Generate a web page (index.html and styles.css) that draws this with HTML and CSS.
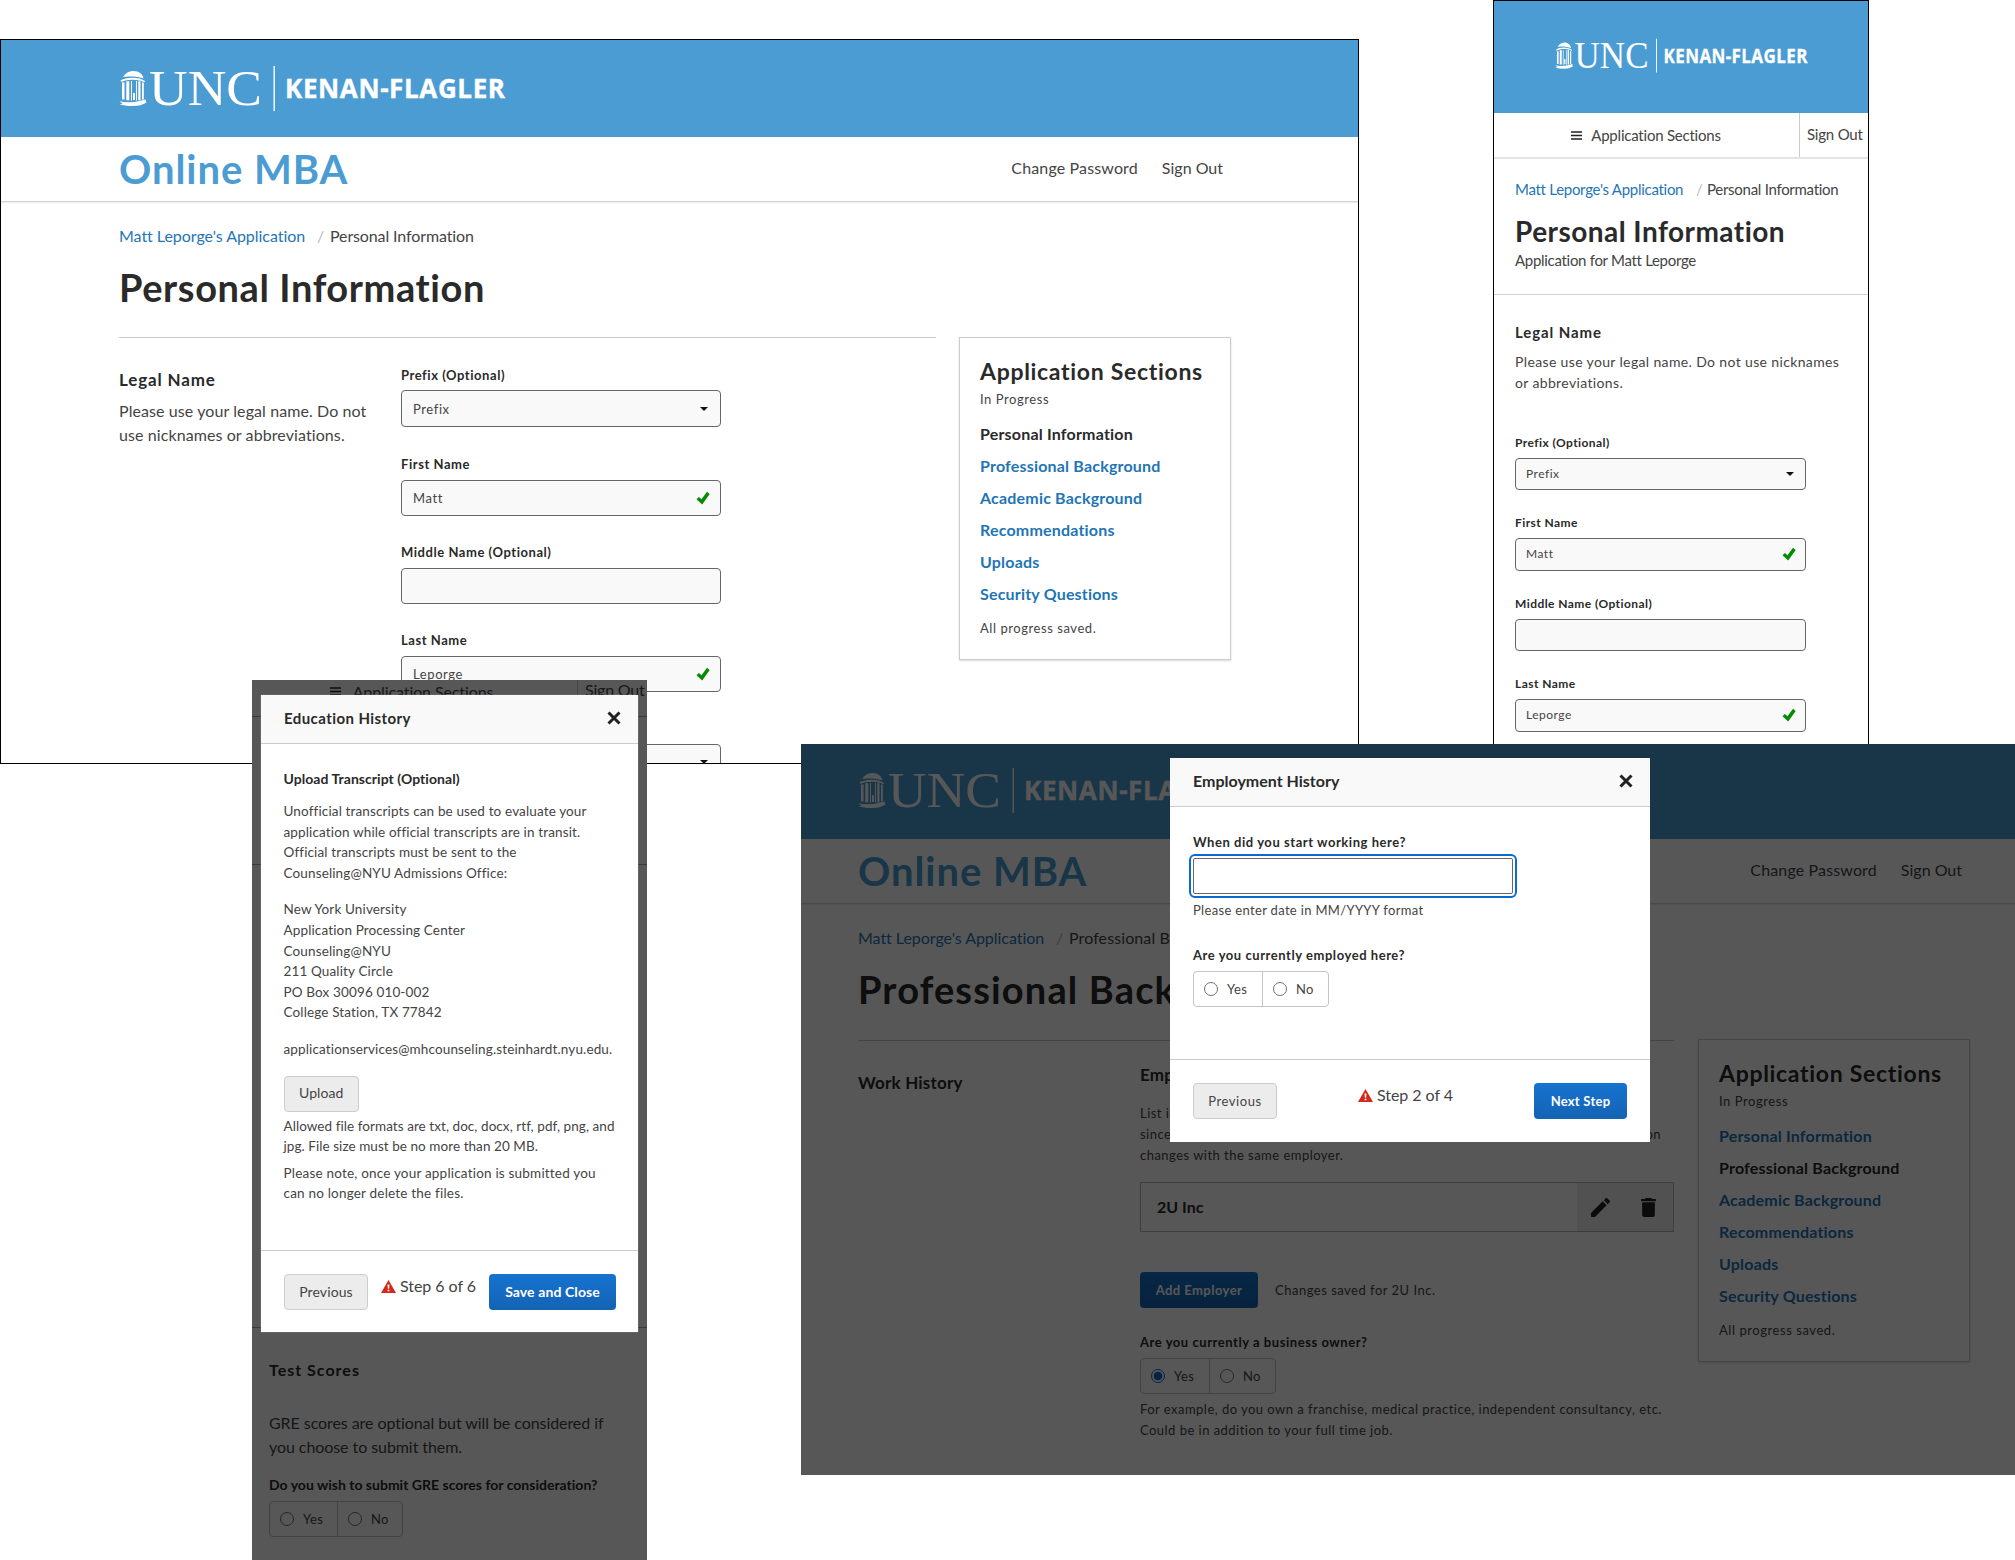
FILE: index.html
```html
<!DOCTYPE html>
<html lang="en">
<head>
<meta charset="utf-8">
<title>Application</title>
<link rel="stylesheet" href="styles.css">
</head>
<body>
<svg width="0" height="0" class="defs">
  <defs>
    <symbol id="logo" viewBox="0 0 390 48" preserveAspectRatio="none">
      <g fill="#fff">
        <path d="M4 12 C7 7.500 11 6 14.500 6 C20 6 24 9.500 24.500 13.500 C20 11.500 9 10.800 4 12z"/>
        <path d="M1.500 15.500 C7 11.600 21 11.600 26 16 L25.500 17.300 C20 13.800 8 13.800 2.500 17z"/>
        <path d="M3 17.500h2.500v17h-2.500zM7.300 16.300h3v19h-3zM12 16h1v19.500h-1zM17 16h1v19.500h-1zM19.300 16.300h2.200v19h-2.200zM23 17.500h1.800v17h-1.800zM14 28.500q1-1.500 2 0v6.500h-2z"/>
        <path d="M.5 36.200 Q12 38.800 26.500 34.500 L27.500 37.500 Q22 41 14 41 Q5 41 .5 39.200 L3.500 38.700z"/>
      </g>
      <text x="30" y="39.800" textLength="113" lengthAdjust="spacingAndGlyphs" class="logo-unc">UNC</text>
      <path d="M155.200 1v45" stroke="#fff" stroke-width="1.400"/>
      <text x="166" y="33" textLength="220" class="logo-kf">KENAN-FLAGLER</text>
    </symbol>
    <symbol id="check" viewBox="0 0 14 14"><path d="M.5 8.200 2.900 5.900 5.500 8.200 11 .8 13.700 2.900 6.200 13.400z" fill="#058a05"/></symbol>
    <symbol id="cross" viewBox="0 0 14 14"><path d="M1.500 1.500l11 11M12.500 1.500l-11 11" stroke="#222" stroke-width="3"/></symbol>
    <symbol id="warn" viewBox="0 0 15 13"><path d="M7.500 0 15 13H0z" fill="#d5281b"/><path d="M6.500 4.500h2l-.4 4.300h-1.200zM6.600 9.700h1.800v1.600H6.600z" fill="#fff"/></symbol>
    <symbol id="bars" viewBox="0 0 11 9"><path d="M0 1h11M0 4.500h11M0 8h11" stroke="#222" stroke-width="1.400"/></symbol>
  </defs>
</svg>

<section class="window desktop win-personal">
  <header class="brand"><svg class="logo"><use href="#logo"/></svg></header>
  <div class="bar">
    <div class="program">Online MBA</div>
    <nav><span class="n1">Change Password</span><span>Sign Out</span></nav>
  </div>
  <div class="page">
    <div class="crumbs"><a>Matt Leporge's Application</a><i>/</i><span>Personal Information</span></div>
    <h1>Personal Information</h1>
    <div class="cols">
      <main>
        <div class="intro"><h2>Legal Name</h2><p>Please use your legal name. Do not<br>use nicknames or abbreviations.</p></div>
        <div class="form">
          <label>Prefix (Optional)</label>
          <div class="box select">Prefix<i class="caret"></i></div>
          <label>First Name</label>
          <div class="box">Matt<svg class="ok"><use href="#check"/></svg></div>
          <label>Middle Name (Optional)</label>
          <div class="box"></div>
          <label>Last Name</label>
          <div class="box">Leporge<svg class="ok"><use href="#check"/></svg></div>
          <label></label>
          <div class="box"><i class="caret"></i></div>
        </div>
      </main>
      <aside>
        <h3>Application Sections</h3>
        <small>In Progress</small>
        <ul><li class="now">Personal Information</li><li>Professional Background</li><li>Academic Background</li><li>Recommendations</li><li>Uploads</li><li>Security Questions</li></ul>
        <small>All progress saved.</small>
      </aside>
    </div>
  </div>
</section>

<section class="window mobile">
  <header class="brand"><svg class="logo"><use href="#logo"/></svg></header>
  <div class="tabs"><div class="menu"><svg><use href="#bars"/></svg>Application Sections</div><div class="out">Sign Out</div></div>
  <div class="head">
    <div class="crumbs"><a>Matt Leporge's Application</a><i>/</i><span>Personal Information</span></div>
    <h1>Personal Information</h1>
    <div class="sub">Application for Matt Leporge</div>
  </div>
  <div class="body">
    <h2>Legal Name</h2>
    <p>Please use your legal name. Do not use nicknames<br>or abbreviations.</p>
    <div class="form">
      <label>Prefix (Optional)</label>
      <div class="box">Prefix<i class="caret"></i></div>
      <label>First Name</label>
      <div class="box">Matt<svg class="ok"><use href="#check"/></svg></div>
      <label>Middle Name (Optional)</label>
      <div class="box"></div>
      <label>Last Name</label>
      <div class="box">Leporge<svg class="ok"><use href="#check"/></svg></div>
    </div>
  </div>
</section>

<section class="window desktop win-work">
  <header class="brand"><svg class="logo"><use href="#logo"/></svg></header>
  <div class="bar">
    <div class="program">Online MBA</div>
    <nav><span class="n1">Change Password</span><span>Sign Out</span></nav>
  </div>
  <div class="page">
    <div class="crumbs"><a>Matt Leporge's Application</a><i>/</i><span>Professional Background</span></div>
    <h1>Professional Background</h1>
    <div class="cols">
      <main>
        <div class="intro"><h2>Work History</h2></div>
        <div class="work">
          <h2>Employers</h2>
          <p class="note"><span>List in reverse order each position that you have held</span><span class="full">since completing your degree. Include every promotion and position</span><span>changes with the same employer.</span></p>
          <div class="employer"><b>2U Inc</b>
            <div class="tools">
              <svg viewBox="3 3 18 18"><path d="M3 17.250V21h3.750L17.810 9.940l-3.750-3.750zM20.710 7.040a1 1 0 0 0 0-1.410l-2.340-2.340a1 1 0 0 0-1.410 0l-1.830 1.830 3.750 3.750z"/></svg>
              <svg viewBox="3 3 18 18"><path d="M6 19a2 2 0 0 0 2 2h8a2 2 0 0 0 2-2V7H6zM19 4h-3.500l-1-1h-5l-1 1H5v2h14z"/></svg>
            </div>
          </div>
          <div class="addrow"><span class="btn blue">Add Employer</span><span>Changes saved for 2U Inc.</span></div>
          <label>Are you currently a business owner?</label>
          <div class="radios"><span><i class="on"></i>Yes</span><span><i></i>No</span></div>
          <p class="note last"><span>For example, do you own a franchise, medical practice, independent consultancy, etc.</span><span>Could be in addition to your full time job.</span></p>
        </div>
      </main>
      <aside>
        <h3>Application Sections</h3>
        <small>In Progress</small>
        <ul><li>Personal Information</li><li class="now">Professional Background</li><li>Academic Background</li><li>Recommendations</li><li>Uploads</li><li>Security Questions</li></ul>
        <small>All progress saved.</small>
      </aside>
    </div>
  </div>
  <div class="shade"></div>
  <div class="modal employment">
    <div class="title"><span>Employment History</span><svg><use href="#cross"/></svg></div>
    <div class="content">
      <label>When did you start working here?</label>
      <div class="focus"></div>
      <div class="hint">Please enter date in MM/YYYY format</div>
      <label>Are you currently employed here?</label>
      <div class="radios"><span><i></i>Yes</span><span><i></i>No</span></div>
    </div>
    <div class="foot"><span class="btn">Previous</span><span class="step"><svg><use href="#warn"/></svg>Step 2 of 4</span><span class="btn blue">Next Step</span></div>
  </div>
</section>

<section class="window win-upload">
  <div class="tabs"><div class="menu"><svg><use href="#bars"/></svg>Application Sections</div><div class="out">Sign Out</div></div>
  <div class="blank b1"></div>
  <div class="blank b2"></div>
  <div class="scores">
    <h2>Test Scores</h2>
    <p>GRE scores are optional but will be considered if<br>you choose to submit them.</p>
    <label>Do you wish to submit GRE scores for consideration?</label>
    <div class="radios"><span><i></i>Yes</span><span><i></i>No</span></div>
  </div>
  <div class="shade"></div>
  <div class="modal education">
    <div class="title"><span>Education History</span><svg><use href="#cross"/></svg></div>
    <div class="content">
      <h4>Upload Transcript (Optional)</h4>
      <p>Unofficial transcripts can be used to evaluate your<br>application while official transcripts are in transit.<br>Official transcripts must be sent to the<br>Counseling@NYU Admissions Office:</p>
      <p>New York University<br>Application Processing Center<br>Counseling@NYU<br>211 Quality Circle<br>PO Box 30096 010-002<br>College Station, TX 77842</p>
      <p>applicationservices@mhcounseling.steinhardt.nyu.edu.</p>
      <span class="btn">Upload</span>
      <p class="tight">Allowed file formats are txt, doc, docx, rtf, pdf, png, and<br>jpg. File size must be no more than 20 MB.</p>
      <p class="tight">Please note, once your application is submitted you<br>can no longer delete the files.</p>
    </div>
    <div class="foot"><span class="btn">Previous</span><span class="step"><svg><use href="#warn"/></svg>Step 6 of 6</span><span class="btn blue">Save and Close</span></div>
  </div>
</section>
</body>
</html>
```
FILE: styles.css
```css
* { box-sizing: border-box; }
body {
  margin: 0; width: 2015px; height: 1560px; position: relative; overflow: hidden;
  background: #fff; color: #444;
  font-family: Lato, "Liberation Sans", sans-serif; font-size: 13px; line-height: 20px;
  font-variant-ligatures: none;
}
h1, h2, h3, h4, p, ul { margin: 0; padding: 0; list-style: none; }
h1, h2, h3, h4, label { color: #2a2a2a; font-weight: 700; }
i { font-style: normal; }
a { color: #1f75b5; }
label { display: block; height: 20px; font-size: 13px; line-height: 19px; letter-spacing: .55px; white-space: nowrap; }
.defs { position: absolute; }
.logo { display: block; width: 390px; height: 48px; }
.logo-unc { font-family: "Liberation Serif", serif; font-size: 50px; fill: #fff; }
.logo-kf { font-family: "Open Sans", sans-serif; font-weight: 700; font-size: 26px; fill: #fff; stroke: #fff; stroke-width: .4px; }

/* windows on the canvas */
.window { position: absolute; overflow: hidden; background: #fff; }
.win-personal { left: 0; top: 39px; width: 1359px; height: 725px; border: 1px solid #000; --l: 118px; --r: 135px; --h: 97px; }
.win-work { left: 801px; top: 744px; width: 1214px; height: 731px; --l: 57px; --r: 53px; --h: 95px; }
.mobile { left: 1493px; top: 0; width: 376px; height: 760px; border: 1px solid #000; }
.win-upload { left: 252px; top: 680px; width: 395px; height: 880px; }
.shade { position: absolute; inset: 0; background: rgba(0, 0, 0, .66); }

/* desktop layout */
.brand { background: #4b9cd3; display: flex; }
.desktop .brand { height: var(--h); padding: 0 0 24px var(--l); align-items: flex-end; }
.bar {
  height: 65px; padding: 0 var(--r) 0 var(--l); display: flex; justify-content: space-between; align-items: center;
  border-bottom: 1px solid #d5d5d5; box-shadow: 0 1px 1px #eee;
}
.program { font-size: 40px; font-weight: 700; line-height: 48px; letter-spacing: .95px; color: #4b9cd3; }
.bar nav { display: flex; gap: 24px; font-size: 16px; padding-bottom: 2px; }
.bar .n1 { letter-spacing: .14px; }
.page { padding: 22px 0 0 var(--l); }
.crumbs { display: flex; white-space: nowrap; }
.crumbs i { color: #bbb; }
.page .crumbs { font-size: 16px; line-height: 24px; height: 24px; }
.page .crumbs a { letter-spacing: -.04px; width: 198px; }
.page .crumbs i { width: 13px; }
.page .crumbs span { letter-spacing: -.12px; }
.win-work .crumbs span { letter-spacing: .1px; }
.desktop h1 { font-size: 38px; line-height: 48px; letter-spacing: .6px; margin: 15px 0 26px; white-space: nowrap; }
.win-work h1 { margin: 15px 0 27px; letter-spacing: 1.150px; }
.cols { display: flex; gap: 23px; align-items: flex-start; }
.cols main { width: 817px; border-top: 1px solid #c8c8c8; display: flex; }
.win-work .cols { gap: 24px; }
.win-work .cols main { width: 816px; }
.intro { width: 282px; padding-top: 30px; }
.desktop h2 { font-size: 17px; line-height: 24px; letter-spacing: .85px; }
.win-work h2 { letter-spacing: .2px; }
.intro p { margin-top: 7px; font-size: 16px; line-height: 24px; letter-spacing: .09px; white-space: nowrap; }
.form .box {
  position: relative; height: 36px; margin: 6px 0 26px; padding: 0 11px; display: flex; align-items: center; justify-content: space-between;
  border: 1px solid #666; border-radius: 4px; background: #f9f9f9; letter-spacing: .6px; color: #444;
}
.desktop .form { width: 320px; padding-top: 27px; }
.desktop .form label { line-height: 20px; }
.desktop .form .select { height: 37px; margin: 5px 0 27px; }
.caret { margin: 0 1px 0 auto; border: 4px solid transparent; border-top-color: #111; border-bottom: 0; }
.ok { width: 14px; height: 14px; margin-right: -1px; }
aside {
  width: 272px; height: 323px; padding: 18px 20px 0; border: 1px solid #ccc; background: #fff;
  box-shadow: 0 1px 2px rgba(0, 0, 0, .15);
}
aside h3 { font-size: 23px; line-height: 30px; letter-spacing: .69px; white-space: nowrap; }
aside small { display: block; margin-top: 3px; font-size: 13px; line-height: 20px; letter-spacing: .56px; }
aside ul { margin: 9px 0 8px; }
aside li { font-size: 16px; font-weight: 700; line-height: 32px; letter-spacing: .19px; color: #1f75b5; }
aside .now { color: #2a2a2a; }
.win-work aside { margin-top: -1px; }

/* work history */
.work { flex: 1; padding-top: 22px; }
.note { margin-top: 16px; line-height: 21px; letter-spacing: .47px; white-space: nowrap; }
.note span { display: block; }
.note .full { width: 521px; text-align-last: justify; white-space: normal; }
.employer { display: flex; height: 50px; margin-top: 16px; border: 1px solid #b5b5b5; align-items: center; }
.employer b { flex: 1; padding-left: 16px; font-size: 16px; color: #2a2a2a; }
.tools { width: 96px; height: 48px; background: #ececec; display: flex; align-items: center; padding-left: 14px; gap: 29px; fill: #222; }
.tools svg { width: 19px; height: 19px; }
.addrow { display: flex; align-items: center; gap: 17px; margin: 40px 0 25px; letter-spacing: .5px; }
.btn {
  height: 36px; padding: 0 15px; display: inline-flex; align-items: center; justify-content: center;
  border: 1px solid #ccc; border-radius: 4px; background: #ececec; font-size: 13px; letter-spacing: .55px; white-space: nowrap;
}
.blue { border: 0; background: linear-gradient(#1673d0, #1463b3); color: #fff; font-weight: 700; }
.addrow .blue { width: 118px; letter-spacing: .45px; }
.radios { display: inline-flex; height: 36px; border: 1px solid #c4c4c4; border-radius: 4px; margin-top: 5px; vertical-align: top; }
.radios span { width: 68px; display: flex; align-items: center; padding-left: 10px; letter-spacing: .4px; }
.radios span + span { width: 66px; padding-left: 10px; border-left: 1px solid #c4c4c4; }
.radios i { width: 14px; height: 14px; margin-right: 9px; border: 1px solid #707070; border-radius: 50%; background: #fff; }
.radios .on { border-color: #0a66d6; background: radial-gradient(#0a66d6 4px, #fff 4.600px); border-width: 1.500px; }
.note.last { margin-top: 5px; }

/* mobile */
.mobile .brand { height: 112px; padding: 37px 0 0 61px; }
.mobile .logo { width: 255px; height: 36px; }
.tabs { display: flex; height: 46px; border-bottom: 2px solid #e3e3e3; font-size: 15px; }
.tabs .menu { width: 304px; display: flex; align-items: center; justify-content: center; gap: 9px; letter-spacing: -.22px; white-space: nowrap; }
.tabs .menu svg { width: 11px; height: 9px; }
.tabs .out { border-left: 1px solid #ccc; margin-left: 1px; padding-left: 7px; line-height: 43px; white-space: nowrap; letter-spacing: -.2px; }
.head { padding: 20px 0 24px 21px; border-bottom: 1px solid #d0d0d0; }
.mobile .crumbs { font-size: 15px; letter-spacing: -.28px; }
.mobile .crumbs a { width: 181px; }
.mobile .crumbs i { width: 11px; }
.mobile h1 { margin: 16px 0 3px; font-size: 28px; line-height: 32px; letter-spacing: .46px; white-space: nowrap; }
.mobile .sub { font-size: 15px; letter-spacing: -.3px; }
.mobile .body { padding: 27px 0 0 21px; }
.mobile h2 { font-size: 15px; letter-spacing: .9px; }
.mobile p { margin-top: 8.500px; font-size: 14px; line-height: 21px; letter-spacing: .36px; white-space: nowrap; }
.mobile .form { width: 291px; padding-top: 41px; }
.mobile label { font-size: 12px; line-height: 18px; letter-spacing: .43px; }
.mobile .box { height: 32.500px; margin: 4px 0 24px; padding: 0 10px; font-size: 12px; letter-spacing: .5px; }

/* modals */
.modal { position: absolute; background: #fff; display: flex; flex-direction: column; }
.modal .title {
  height: 49px; padding: 0 23px 2px; display: flex; align-items: center; justify-content: space-between;
  background: #f9f9f9; border-bottom: 1px solid #ccc; font-size: 16px; font-weight: 700; color: #2a2a2a;
}
.title svg { width: 14px; height: 14px; margin-right: -6px; }
.foot { margin-top: auto; border-top: 1px solid #ccc; padding: 23px 23px 0 23px; height: 83px; display: flex; justify-content: space-between; align-items: flex-start; }
.step { display: flex; align-items: center; gap: 4px; margin-top: 2px; font-size: 16px; letter-spacing: -.05px; }
.step svg { width: 15px; height: 13px; }
.employment { left: 369px; top: 14px; width: 480px; height: 384px; }
.employment .content { padding: 26px 23px 0; }
.employment .focus { width: 320px; height: 36px; margin-top: 5px; border: 1px solid #666; border-radius: 2px; outline: 2px solid #0a6ad4; outline-offset: 2px; }
.hint { margin: 6px 0 26px; letter-spacing: .33px; }
.foot .btn { width: 84px; padding: 0; }
.employment .foot .blue { width: 93px; letter-spacing: .25px; }
.education { left: 9px; top: 15px; width: 377px; height: 637px; box-shadow: 0 0 1px #aaa; }
.education .title { font-size: 15px; letter-spacing: .42px; }
.education .content { padding: 25px 22.500px 0; font-size: 13.500px; line-height: 20.600px; white-space: nowrap; letter-spacing: .14px; }
.education h4 { font-size: 14px; line-height: 20px; letter-spacing: .05px; margin-bottom: -4px; }
.education p { margin: 16px 0; }
.education .content .btn { display: flex; width: 75.500px; padding: 0; letter-spacing: .1px; font-size: 14px; }
.education .tight { margin: 4px 0 6px; letter-spacing: .06px; }
.education .tight:last-child { letter-spacing: .2px; }
.education .foot { height: 82px; padding-right: 22px; }
.education .foot .btn { letter-spacing: .1px; font-size: 14px; }
.education .foot .blue { width: 127px; }

/* page under the upload modal */
.win-upload .tabs { margin-top: -13px; height: 50px; border-bottom: 1px solid #aaa; font-size: 16px; }
.win-upload .menu { width: 325px; flex-shrink: 0; padding-right: 6px; gap: 12px; letter-spacing: -.1px; }
.win-upload .out { margin-left: 0; line-height: 46px; padding-left: 7px; }
.blank { border-bottom: 1px solid #aaa; }
.b1 { height: 148px; }
.b2 { height: 463px; }
.scores { padding: 30px 0 0 17px; }
.scores h2 { font-size: 16px; line-height: 24px; letter-spacing: 1px; }
.scores p { margin: 29px 0 16px; font-size: 16px; line-height: 24px; letter-spacing: -.07px; white-space: nowrap; }
.scores label { font-size: 14px; letter-spacing: .01px; }
.scores .radios { margin-top: 6px; }
.scores .radios span { width: 67px; }
.scores .radios span + span { width: 65px; }
```
